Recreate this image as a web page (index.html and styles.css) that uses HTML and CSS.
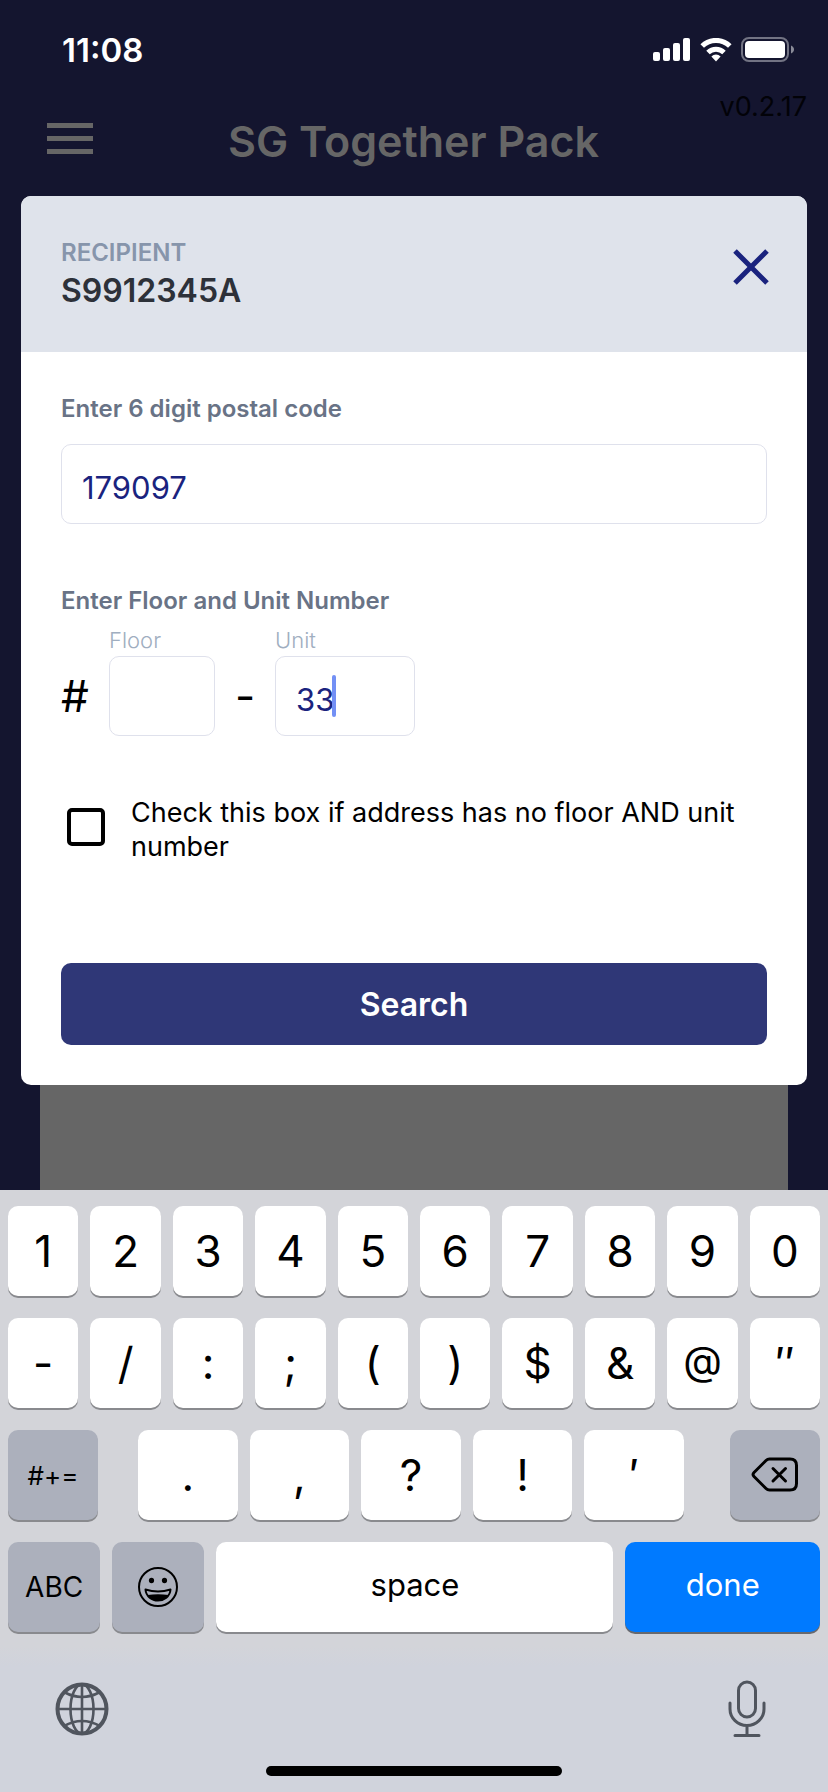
FILE: index.html
```html
<!DOCTYPE html>
<html lang="en">
<head>
<meta charset="utf-8">
<meta name="viewport" content="width=device-width, initial-scale=1">
<title>SG Together Pack</title>
<link rel="stylesheet" href="styles.css">
</head>
<body>
<div class="screen">
  <div class="status">
    <time class="clock">11:08</time>
    <div class="status-icons">
      <svg width="38" height="24" viewBox="0 0 38 24" fill="#fff" aria-hidden="true">
        <rect x="0" y="14" width="7" height="9" rx="2"/><rect x="10" y="10" width="7" height="13" rx="2"/><rect x="20" y="5" width="7" height="18" rx="2"/><rect x="30" y="0" width="7" height="23" rx="2"/>
      </svg>
      <svg width="32" height="24" viewBox="0 0 32 24" aria-hidden="true">
        <g fill="none" stroke="#fff" stroke-width="5"><path d="M2.200 8.100A19.500 19.500 0 0 1 29.800 8.100"/><path d="M8 14.500A11.500 11.500 0 0 1 24 14.500"/></g>
        <path d="M11.400 18.400A6.600 6.600 0 0 1 20.600 18.400L16 23.400Z" fill="#fff"/>
      </svg>
      <svg width="54" height="26" viewBox="0 0 54 26" aria-hidden="true">
        <rect x="1" y="1" width="46" height="23" rx="7" fill="none" stroke="#727383" stroke-width="2"/>
        <rect x="4" y="4" width="40" height="17" rx="4" fill="#fff"/>
        <path d="M50 8.500C54 10 54 15 50 16.500Z" fill="#8a8b98"/>
      </svg>
    </div>
  </div>
  <header class="topbar">
    <button class="menu" aria-label="Menu">
      <svg width="46" height="32" viewBox="0 0 46 32" fill="#666"><rect width="46" height="5"/><rect y="13" width="46" height="5"/><rect y="26" width="46" height="5"/></svg>
    </button>
    <h1 class="title">SG Together Pack</h1>
    <span class="version">v0.2.17</span>
  </header>
  <main class="page">
    <form class="modal">
      <div class="modal-head">
        <div>
          <div class="eyebrow">RECIPIENT</div>
          <div class="recipient">S9912345A</div>
        </div>
        <button type="button" class="close" aria-label="Close">
          <svg width="36" height="36" viewBox="0 0 36 36" fill="none" stroke="#1a237e" stroke-width="5"><path d="M2 2L34 34M34 2L2 34"/></svg>
        </button>
      </div>
      <div class="modal-body">
        <label class="label" for="postal">Enter 6 digit postal code</label>
        <input class="field" id="postal" type="text" value="179097">
        <div class="label unit-label">Enter Floor and Unit Number</div>
        <div class="unit-row">
          <span class="mark hash">#</span>
          <div class="floor">
            <label class="sub" for="floor">Floor</label>
            <input class="field" id="floor" type="text">
          </div>
          <span class="mark dash">-</span>
          <div class="unit">
            <label class="sub" for="unit">Unit</label>
            <input class="field" id="unit" type="text" value="33">
            <span class="caret"></span>
          </div>
        </div>
        <div class="check-row">
          <input class="check" type="checkbox" id="nofloor">
          <label class="check-text" for="nofloor">Check this box if address has no floor AND unit number</label>
        </div>
        <button type="button" class="search">Search</button>
      </div>
    </form>
    <div class="panel"></div>
  </main>
  <section class="keyboard" aria-label="Keyboard">
    <div class="keys">
      <button class="key">1</button><button class="key">2</button><button class="key">3</button><button class="key">4</button><button class="key">5</button><button class="key">6</button><button class="key">7</button><button class="key">8</button><button class="key">9</button><button class="key">0</button>
    </div>
    <div class="keys">
      <button class="key">-</button><button class="key">/</button><button class="key">:</button><button class="key">;</button><button class="key">(</button><button class="key">)</button><button class="key">$</button><button class="key">&amp;</button><button class="key at">@</button><button class="key">″</button>
    </div>
    <div class="keys keys-punct">
      <button class="key mod symbols">#+=</button>
      <div class="keys group">
        <button class="key">.</button><button class="key">,</button><button class="key">?</button><button class="key">!</button><button class="key">′</button>
      </div>
      <button class="key mod" aria-label="Delete">
        <svg width="48" height="36" viewBox="0 0 48 36" fill="none" stroke="#000" stroke-width="3" stroke-linecap="round" stroke-linejoin="round"><path d="M18.500 2H39Q45.500 2 45.500 8.500V26.500Q45.500 33 39 33H18.500Q16.500 33 15 31.500L3 19.500Q1 17.500 3 15.500L15 3.500Q16.500 2 18.500 2Z"/><path d="M22 11.500L34.500 24M34.500 11.500L22 24"/></svg>
      </button>
    </div>
    <div class="keys keys-bottom">
      <button class="key mod abc">ABC</button>
      <button class="key mod" aria-label="Emoji">
        <svg width="42" height="42" viewBox="0 0 42 42" fill="#000"><circle cx="21" cy="21" r="19" fill="none" stroke="#000" stroke-width="2"/><ellipse cx="14.500" cy="14.500" rx="2.600" ry="2.800"/><ellipse cx="27.500" cy="14.500" rx="2.600" ry="2.800"/><path d="M8.500 23.500C16 26 26 26 33.500 23.500C33 30.500 27 34.500 21 34.500S9 30.500 8.500 23.500Z" fill="none" stroke="#000" stroke-width="2" stroke-linejoin="round"/><path d="M10.500 29Q21 27.500 31.500 29C29 33 25 34.500 21 34.500S13 33 10.500 29Z"/></svg>
      </button>
      <button class="key word">space</button>
      <button class="key word done">done</button>
    </div>
    <div class="tools">
      <button class="tool" aria-label="Next keyboard">
        <svg width="54" height="54" viewBox="0 0 54 54" fill="none" stroke="#50555e" stroke-width="2.600"><circle cx="27" cy="27" r="24.500" stroke-width="4"/><path d="M27 2V52M2 27H52"/><ellipse cx="27" cy="27" rx="11.500" ry="24.500"/><path d="M9 10Q27 20 45 10M9 44Q27 34 45 44"/></svg>
      </button>
      <button class="tool" aria-label="Dictate">
        <svg width="38" height="58" viewBox="0 0 38 58" fill="none" stroke="#50555e" stroke-width="3" stroke-linecap="round"><rect x="10.500" y="2" width="17" height="35" rx="8.500"/><path d="M2 23V29A17 16.500 0 0 0 36 29V23M19 46V55M7 55.500H31"/></svg>
      </button>
    </div>
    <div class="home"></div>
  </section>
</div>
</body>
</html>
```
FILE: styles.css
```css
* { box-sizing: border-box; }
body { margin: 0; background: #14152f; font-family: Inter, "Liberation Sans", sans-serif; color: #000; }
button { border: 0; padding: 0; background: none; font: inherit; color: inherit; display: flex; align-items: center; justify-content: center; }
svg { display: block; }
.screen { min-height: 100vh; display: flex; flex-direction: column; }

.status { display: flex; justify-content: space-between; align-items: center; padding: 30px 33px 0 62px; color: #fff; }
.clock { font-size: 33px; line-height: 40px; font-weight: 600; }
.status-icons { display: flex; align-items: center; gap: 9px; }

.topbar { position: relative; display: grid; grid-template-columns: 46px 1fr 46px; align-items: start; padding: 45px 48px 29px 47px; color: #666; }
.menu { margin-top: 8px; }
.title { margin: 0; text-align: center; font-size: 43px; line-height: 52px; font-weight: 600; }
.version { position: absolute; top: 20px; right: 21px; font-size: 27px; line-height: 34px; color: #020208; }

.page { flex: 1; display: flex; flex-direction: column; }
.modal { margin: 0 21px; border-radius: 10px; background: #fff; overflow: hidden; }
.modal-head { display: flex; justify-content: space-between; align-items: flex-start; padding: 40px 38px 40px 40px; background: #dfe3eb; }
.eyebrow { font-size: 24px; line-height: 34px; font-weight: 600; color: #8795ab; }
.recipient { font-size: 32px; line-height: 42px; font-weight: 600; color: #2d3139; }
.close { margin-top: 13px; }
.modal-body { padding: 40px; }
.label { display: block; font-size: 24px; line-height: 34px; font-weight: 600; color: #697386; }
.field { display: block; width: 100%; height: 80px; margin: 0; padding: 7px 20px 0; border: 1px solid #dfe1ec; border-radius: 10px; background: #fff; font: inherit; font-size: 31px; color: #1a237e; outline: 0; }
.label + .field { margin-top: 18px; }
.unit-label { margin-top: 60px; }
.unit-row { display: flex; align-items: flex-end; margin-top: 6px; }
.mark { line-height: 80px; font-size: 44px; }
.hash { width: 48px; }
.dash { width: 60px; text-align: center; }
.floor { width: 106px; }
.unit { width: 140px; position: relative; }
.sub { display: block; font-size: 22px; line-height: 32px; font-weight: 300; color: #a0aec0; }
.caret { position: absolute; left: 57px; bottom: 19px; width: 4px; height: 42px; border-radius: 2px; background: #7390f5; }
.check-row { display: flex; align-items: flex-start; gap: 26px; margin-top: 60px; padding-left: 6px; }
.check { appearance: none; flex: none; width: 38px; height: 38px; margin: 12px 0 0; border: 4px solid #000; border-radius: 5px; }
.check-text { font-size: 27px; line-height: 34px; }
.search { width: 100%; height: 82px; margin-top: 99px; border-radius: 10px; background: #2f3777; color: #fff; font-size: 32px; font-weight: 600; }
.panel { flex: 1; min-height: 96px; margin: 0 40px; background: #666; }

.keyboard { display: flex; flex-direction: column; gap: 22px; padding: 16px 8px; background: linear-gradient(#d3d4d9 0, #d3d4d9 456px, #d0d3dc 476px); }
.keys { display: flex; gap: 12px; }
.key { flex: 1; min-width: 0; height: 90px; border-radius: 10px; background: #fff; box-shadow: 0 2px 0 #898a8e; font-size: 44px; }
.at { padding-bottom: 6px; font-size: 40px; }
.mod { background: #acb0bc; }
.keys-punct { justify-content: space-between; gap: 0; }
.keys-punct > .mod { flex: 90; }
.group { flex: 546; margin: 0 46px 0 40px; }
.symbols { font-size: 26px; }
.abc { font-size: 28px; }
.keys-bottom { display: grid; grid-template-columns: 92fr 92fr 396fr 194fr; }
.word { padding-bottom: 6px; font-size: 31px; }
.done { background: #007aff; color: #fff; box-shadow: 0 2px 0 #68696e; }
.tools { display: flex; justify-content: space-between; align-items: center; padding: 26px 54px 6px 47px; }
.home { align-self: center; width: 296px; height: 10px; border-radius: 5px; background: #000; }
```
